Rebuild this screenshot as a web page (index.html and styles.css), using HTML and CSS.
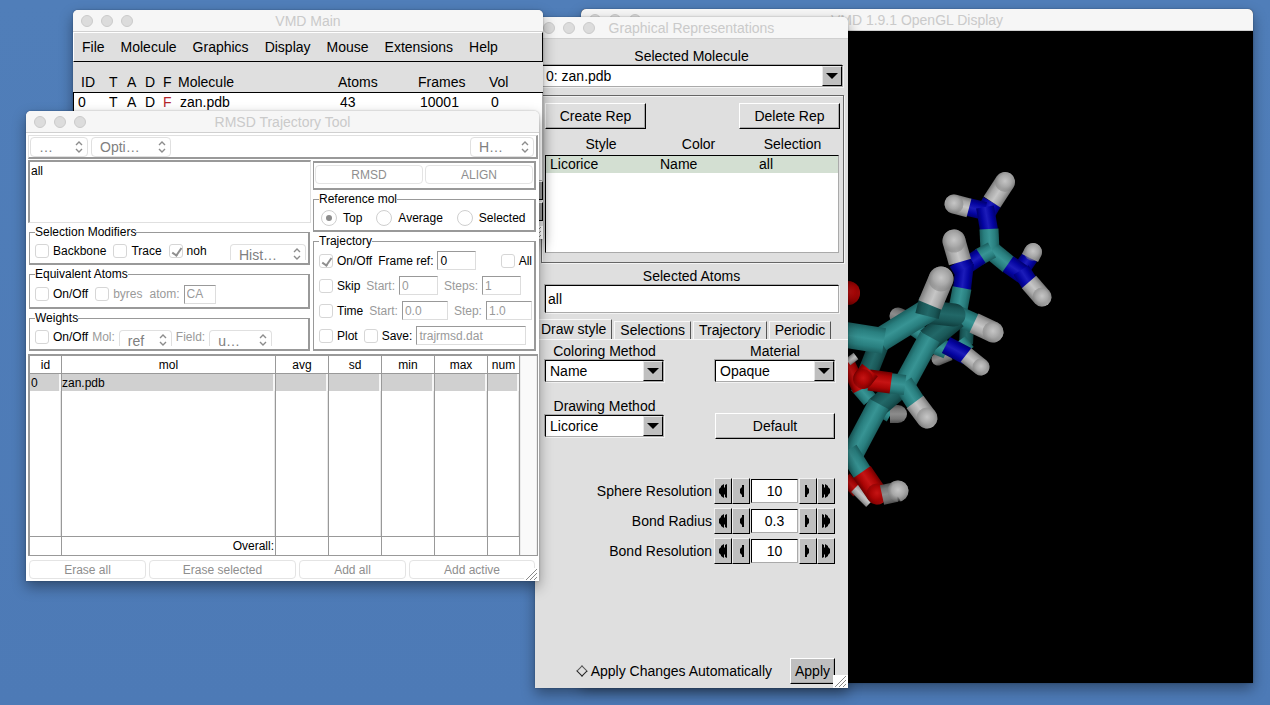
FILE: index.html
```html
<!DOCTYPE html>
<html lang="en">
<head>
<meta charset="utf-8">
<title>VMD</title>
<link rel="stylesheet" href="styles.css">
</head>
<body>
<main class="desktop">

  <section class="window display-window">
    <header class="titlebar"><span class="lights"><i></i><i></i><i></i></span><h2>VMD 1.9.1 OpenGL Display</h2></header>
    <svg class="scene" id="scene" viewBox="581 31 672 652" preserveAspectRatio="xMinYMin meet" role="img" aria-label="Licorice model of zan.pdb"></svg>
  </section>

  <section class="window rep-window">
    <header class="titlebar"><span class="lights"><i></i><i></i><i></i></span><h2>Graphical Representations</h2></header>
    <div class="rep-body">
      <label class="caption" for="selmol">Selected Molecule</label>
      <span class="combo combo-wide"><select id="selmol"><option>0: zan.pdb</option></select><span class="arrow"><svg viewBox="0 0 12 6"><path d="M0 0H12L6 6Z"/></svg></span></span>
      <div class="rep-frame">
        <div class="rep-actions"><button class="bevel">Create Rep</button><button class="bevel">Delete Rep</button></div>
        <table class="rep-table">
          <thead><tr><th>Style</th><th>Color</th><th>Selection</th></tr></thead>
          <tbody><tr><td>Licorice</td><td>Name</td><td>all</td></tr></tbody>
        </table>
      </div>
      <label class="caption atoms-caption" for="selatoms">Selected Atoms</label>
      <input class="sunken atoms-input" id="selatoms" value="all">
      <nav class="tabs"><button class="tab active">Draw style</button><button class="tab">Selections</button><button class="tab">Trajectory</button><button class="tab">Periodic</button></nav>
      <div class="draw-grid">
        <div class="field"><label for="coloring">Coloring Method</label><span class="combo"><select id="coloring"><option>Name</option></select><span class="arrow"><svg viewBox="0 0 12 6"><path d="M0 0H12L6 6Z"/></svg></span></span></div>
        <div class="field"><label for="material">Material</label><span class="combo"><select id="material"><option>Opaque</option></select><span class="arrow"><svg viewBox="0 0 12 6"><path d="M0 0H12L6 6Z"/></svg></span></span></div>
        <div class="field"><label for="drawing">Drawing Method</label><span class="combo"><select id="drawing"><option>Licorice</option></select><span class="arrow"><svg viewBox="0 0 12 6"><path d="M0 0H12L6 6Z"/></svg></span></span></div>
        <div class="field field-end"><button class="bevel">Default</button></div>
      </div>
      <svg class="defs" aria-hidden="true">
        <symbol id="one" viewBox="0 0 14 16"><path d="M10 2V14H8V12L7 11L6 10V6L7 5L8 4V2Z"/></symbol>
        <symbol id="two" viewBox="0 0 14 16"><path d="M3 6L5 4V3L8 1V5L9 4V2L11 1V15L9 14V12L8 11V15L5 13V12L3 10Z"/></symbol>
      </svg>
      <div class="counters">
        <div class="counter"><label for="sphere">Sphere Resolution</label><span class="spin"><button aria-label="Much less"><svg><use href="#two"/></svg></button><button aria-label="Less"><svg><use href="#one"/></svg></button><input id="sphere" value="10"><button class="flip" aria-label="More"><svg><use href="#one"/></svg></button><button class="flip" aria-label="Much more"><svg><use href="#two"/></svg></button></span></div>
        <div class="counter"><label for="radius">Bond Radius</label><span class="spin"><button aria-label="Much less"><svg><use href="#two"/></svg></button><button aria-label="Less"><svg><use href="#one"/></svg></button><input id="radius" value="0.3"><button class="flip" aria-label="More"><svg><use href="#one"/></svg></button><button class="flip" aria-label="Much more"><svg><use href="#two"/></svg></button></span></div>
        <div class="counter"><label for="bondres">Bond Resolution</label><span class="spin"><button aria-label="Much less"><svg><use href="#two"/></svg></button><button aria-label="Less"><svg><use href="#one"/></svg></button><input id="bondres" value="10"><button class="flip" aria-label="More"><svg><use href="#one"/></svg></button><button class="flip" aria-label="Much more"><svg><use href="#two"/></svg></button></span></div>
      </div>
      <footer class="apply-row"><label><input type="checkbox" class="diamond">Apply Changes Automatically</label><button class="bevel apply">Apply</button></footer>
    </div>
    <svg class="grip" viewBox="0 0 15 13"><path d="M2 12L13 1M6 12L13 5M10 12L13 9"/></svg>
  </section>

  <section class="window main-window">
    <header class="titlebar"><span class="lights"><i></i><i></i><i></i></span><h2>VMD Main</h2></header>
    <nav class="menubar"><button>File</button><button>Molecule</button><button>Graphics</button><button>Display</button><button>Mouse</button><button>Extensions</button><button>Help</button></nav>
    <table class="mol-table">
      <colgroup><col class="c-id"><col class="c-flag"><col class="c-flag"><col class="c-flag"><col class="c-fixed"><col class="c-name"><col class="c-atoms"><col class="c-frames"><col class="c-vol"></colgroup>
      <thead><tr><th>ID</th><th>T</th><th>A</th><th>D</th><th>F</th><th>Molecule</th><th>Atoms</th><th>Frames</th><th>Vol</th></tr></thead>
      <tbody><tr><td>0</td><td>T</td><td>A</td><td>D</td><td class="fixed">F</td><td>zan.pdb</td><td>43</td><td>10001</td><td>0</td></tr></tbody>
    </table>
    <div class="transport"><span></span><span></span></div>
    <svg class="grip" viewBox="0 0 15 13"><path d="M2 12L13 1M6 12L13 5M10 12L13 9"/></svg>
  </section>

  <section class="window rmsd-window">
    <header class="titlebar"><span class="lights"><i></i><i></i><i></i></span><h2>RMSD Trajectory Tool</h2></header>
    <div class="rmsd-body">
      <div class="rmsd-menu">
        <span class="popup p-file"><select aria-label="File"><option>…</option></select><svg viewBox="0 0 8 12"><path d="M1 4L4 1L7 4M1 8L4 11L7 8"/></svg></span>
        <span class="popup p-opt"><select aria-label="Options"><option>Opti…</option></select><svg viewBox="0 0 8 12"><path d="M1 4L4 1L7 4M1 8L4 11L7 8"/></svg></span>
        <span class="popup p-help"><select aria-label="Help"><option>H…</option></select><svg viewBox="0 0 8 12"><path d="M1 4L4 1L7 4M1 8L4 11L7 8"/></svg></span>
      </div>
      <div class="rmsd-columns">
        <div class="left-col">
          <textarea aria-label="Selection">all</textarea>
          <fieldset><legend>Selection Modifiers</legend>
            <div class="row"><label><input type="checkbox">Backbone</label><label><input type="checkbox">Trace</label><label><input type="checkbox" checked>noh</label>
            <span class="popup clipped p-hist end"><select aria-label="History"><option>Hist…</option></select><svg viewBox="0 0 8 12"><path d="M1 4L4 1L7 4M1 8L4 11L7 8"/></svg></span></div>
          </fieldset>
          <fieldset class="equiv"><legend>Equivalent Atoms</legend>
            <div class="row"><label><input type="checkbox">On/Off</label><label class="off"><input type="checkbox">byres</label><label class="off">atom: <input type="text" class="w-atom" value="CA"></label></div>
          </fieldset>
          <fieldset><legend>Weights</legend>
            <div class="row tight"><label><input type="checkbox">On/Off</label><label class="off" for="wmol">Mol:</label><span class="popup clipped p-ref"><select id="wmol"><option>ref</option></select><svg viewBox="0 0 8 12"><path d="M1 4L4 1L7 4M1 8L4 11L7 8"/></svg></span><label class="off" for="wfield">Field:</label><span class="popup clipped p-user"><select id="wfield"><option>u…</option></select><svg viewBox="0 0 8 12"><path d="M1 4L4 1L7 4M1 8L4 11L7 8"/></svg></span></div>
          </fieldset>
        </div>
        <div class="right-col">
          <div class="actions"><button class="aqua">RMSD</button><button class="aqua">ALIGN</button></div>
          <fieldset><legend>Reference mol</legend>
            <div class="row radios"><label><input type="radio" name="ref" checked>Top</label><label><input type="radio" name="ref">Average</label><label><input type="radio" name="ref">Selected</label></div>
          </fieldset>
          <fieldset class="traj"><legend>Trajectory</legend>
            <div class="row"><label><input type="checkbox" checked>On/Off</label><label>Frame ref: <input type="text" class="w-num" value="0"></label><label class="end"><input type="checkbox">All</label></div>
            <div class="row"><label><input type="checkbox">Skip</label><label class="off">Start: <input type="text" class="w-num" value="0"></label><label class="off">Steps: <input type="text" class="w-num" value="1"></label></div>
            <div class="row"><label><input type="checkbox">Time</label><label class="off">Start: <input type="text" class="w-time" value="0.0"></label><label class="off">Step: <input type="text" class="w-time" value="1.0"></label></div>
            <div class="row"><label><input type="checkbox">Plot</label><label><input type="checkbox">Save: <input type="text" class="w-file off" value="trajrmsd.dat"></label></div>
          </fieldset>
        </div>
      </div>
      <div class="results">
        <table>
          <colgroup><col class="r-id"><col><col class="r-num"><col class="r-num"><col class="r-num"><col class="r-num"><col class="r-id"></colgroup>
          <thead><tr><th>id</th><th>mol</th><th>avg</th><th>sd</th><th>min</th><th>max</th><th>num</th></tr></thead>
          <tbody>
            <tr class="selected"><td>0</td><td>zan.pdb</td><td></td><td></td><td></td><td></td><td></td></tr>
            <tr class="filler"><td></td><td></td><td></td><td></td><td></td><td></td><td></td></tr>
          </tbody>
          <tfoot><tr><td></td><td>Overall:</td><td></td><td></td><td></td><td></td><td></td></tr></tfoot>
        </table>
        <div class="scroll"></div>
      </div>
      <footer class="rmsd-buttons"><button class="aqua">Erase all</button><button class="aqua">Erase selected</button><button class="aqua">Add all</button><button class="aqua">Add active</button></footer>
    </div>
    <svg class="grip" viewBox="0 0 15 13"><path d="M2 12L13 1M6 12L13 5M10 12L13 9"/></svg>
  </section>

</main>
<script src="scene.js"></script>
</body>
</html>
```

FILE: styles.css
```css
* { box-sizing: border-box; }
body { margin: 0; font-family: "Liberation Sans", Arial, sans-serif; font-size: 14px; color: #000; }
button, input, select, textarea { font: inherit; color: inherit; margin: 0; padding: 0; border: 0; border-radius: 0; background: none; appearance: none; outline: 0; }
table { border-collapse: separate; border-spacing: 0; table-layout: fixed; }
th { font-weight: normal; }
th, td { padding: 0; }

.desktop { position: relative; height: 100vh; overflow: hidden; background: linear-gradient(#507eb9, #4d7ab6); }
.window { position: absolute; display: flex; flex-direction: column; border-radius: 5px 5px 0 0; background: #dfdfdf; box-shadow: 0 6px 14px rgba(0,0,0,.38), 0 0 2px rgba(0,0,0,.3); }
.titlebar { position: relative; display: flex; flex: none; align-items: center; justify-content: center; height: 22px; background: #f6f6f6; border-bottom: 1px solid #d0d0d0; border-radius: 5px 5px 0 0; }
.titlebar h2 { margin: 0; font-size: 14px; line-height: 20px; font-weight: normal; color: #cacaca; }
.lights { position: absolute; left: 8px; top: 5px; display: flex; gap: 8px; }
.lights i { width: 12px; height: 12px; border-radius: 50%; background: #dcdcdc; border: 1px solid #cbcbcb; }
.grip { position: absolute; right: 0; bottom: 0; width: 15px; height: 13px; background: #fff; }
.grip path { stroke: #888; fill: none; }

.display-window { left: 581px; top: 9px; right: 17px; bottom: 22px; background: #000; }
.scene { display: block; width: 100%; flex: 1; min-height: 0; background: #000; }

/* Graphical Representations */
.rep-window { left: 535px; top: 17px; width: 313px; height: 671px; }
.rep-body { flex: 1; display: flex; flex-direction: column; padding-top: 8px; }
.caption { display: block; text-align: center; line-height: 18px; }
.sunken, .combo { background: #fff; border: 1px solid; border-color: #000 #aaa #aaa #000; box-shadow: -1px -1px 0 #aaa, 1px 1px 0 #f2f2f2; }
.combo { display: flex; height: 22px; }
.combo select { flex: 1; min-width: 0; padding-left: 4px; }
.combo-wide { margin: 0 5px 0 6px; }
.arrow { display: flex; align-items: center; justify-content: center; width: 20px; background: #bfbfbf; border: 1px solid; border-color: #e8e8e8 #000 #000 #e8e8e8; }
.arrow svg { width: 12px; height: 6px; }
.bevel { height: 26px; background: #dfdfdf; border: 1px solid; border-color: #fff #000 #000 #fff; box-shadow: inset -1px -1px 0 #a8a8a8; }
.rep-frame { margin: 8px 4px 0 6px; padding: 7px 3px 9px; border: 1px solid #666; box-shadow: inset 1px 1px 0 #f4f4f4, 1px 1px 0 #f4f4f4; }
.rep-actions { display: flex; justify-content: space-between; }
.rep-actions .bevel { width: 101px; }
.rep-table { width: 100%; height: 124px; display: flex; flex-direction: column; padding-right: 1px; }
.rep-table tr { display: grid; grid-template-columns: 110px 1fr 93px; }
.rep-table thead tr { grid-template-columns: 112px 1fr 93px; }
.rep-table thead th:nth-child(2) { padding-right: 6px; }
.rep-table th { line-height: 22px; padding-top: 4px; }
.rep-table tbody { flex: 1; background: #fff; border: 1px solid; border-color: #000 #aaa #aaa #000; }
.rep-table tbody tr { background: #d3dfd2; line-height: 17px; padding-left: 4px; }
.rep-table tbody td:last-child { padding-left: 14px; }
.atoms-caption { margin-top: 4px; }
.atoms-input { height: 28px; margin: 0 9px 0 10px; padding-left: 2px; }
.tabs { display: flex; align-items: flex-end; gap: 2px; height: 26px; margin-top: 1px; border-bottom: 1px solid #f8f8f8; }
.tab { height: 18px; padding: 0 5px; border: 1px solid; border-color: #f8f8f8 #555 transparent #f8f8f8; border-bottom: 0; line-height: 17px; }
.tab.active { height: 20px; padding: 0 5px 0 6px; border-left: 0; }
.draw-grid { display: grid; grid-template-columns: 119px 120px; justify-content: space-between; row-gap: 15px; padding: 2px 13px 0 10px; }
.field { display: flex; flex-direction: column; }
.field label { line-height: 18px; text-align: center; }
.field-end { justify-content: flex-end; }
.field:nth-child(n+3) { height: 42px; }
.defs { position: absolute; width: 0; height: 0; }
.counters { display: flex; flex-direction: column; gap: 4px; padding: 39px 13px 0 0; }
.counter { display: flex; align-items: center; justify-content: flex-end; gap: 2px; height: 26px; }
.spin { display: flex; align-items: center; height: 26px; width: 121px; }
.spin button { width: 18px; height: 26px; background: #bfbfbf; border: 1px solid; border-color: #f0f0f0 #000 #000 #f0f0f0; display: flex; align-items: center; justify-content: center; }
.spin button svg { width: 14px; height: 16px; flex: none; }
.spin .flip svg { transform: scaleX(-1); }
.spin input { flex: 1; min-width: 0; height: 24px; margin: 0 1px; text-align: center; background: #fff; border: 1px solid; border-color: #000 #aaa #aaa #000; }
.apply-row { display: flex; align-items: center; justify-content: flex-end; gap: 18px; margin-top: auto; padding: 0 13px 4px 0; }
.apply-row label { display: flex; align-items: center; gap: 5px; }
.diamond { width: 8px; height: 8px; border: 1px solid; border-color: #555 #222 #222 #555; transform: rotate(45deg); }
.apply { width: 45px; background: #bfbfbf; }

/* VMD Main */
.main-window { left: 73px; top: 10px; width: 470px; height: 229px; }
.menubar { display: flex; gap: 16px; height: 30px; padding: 0 8px; border: 1px solid; border-color: #fff #000 #000 #fff; }
.mol-table { width: 100%; }
.c-id { width: 36px; }
.c-flag { width: 18px; }
.c-fixed { width: 15px; }
.c-atoms { width: 80px; }
.c-frames { width: 71px; }
.c-vol { width: 54px; }
.mol-table th, .mol-table td { text-align: left; white-space: nowrap; }
.mol-table th { height: 31px; padding: 9px 0 0; border-bottom: 1px solid #000; }
.mol-table th:first-child { padding-left: 8px; }
.mol-table td { background: #fff; height: 88px; vertical-align: top; line-height: 19px; padding-left: 2px; border-bottom: 1px solid #aaa; }
.mol-table td:first-child { padding-left: 4px; border-left: 1px solid #000; }
.mol-table td:nth-child(2), .mol-table td:nth-child(3), .mol-table td:nth-child(4), .mol-table td:nth-child(5) { padding-left: 0; }
.mol-table td.fixed { color: #b3262b; }
.mol-table td:last-child { border-right: 1px solid #aaa; }
.transport { display: flex; flex-direction: column; align-items: flex-end; gap: 2px; }
.transport span { width: 30px; height: 19px; background: #999; border: 1px solid; border-color: #fff #000 #000 #fff; }

/* RMSD Trajectory Tool */
.rmsd-window { left: 26px; top: 111px; width: 513px; background: #fff; font-size: 12px; }
.rmsd-body { padding: 2px 1px 2px 2px; }
.rmsd-menu { display: flex; gap: 3px; height: 24px; padding: 1px 2px 0 1px; border: solid; border-width: 1px 2px 2px 1px; border-color: #e0e0e0 #999 #999 #e0e0e0; }
.popup { position: relative; display: flex; height: 20px; border: 1px solid #e0e0e0; border-radius: 4px; color: #808080; font-size: 14px; }
.popup select { width: 100%; padding-left: 8px; }
.popup svg { position: absolute; right: 4px; top: 3px; width: 8px; height: 12px; fill: none; stroke: #8c8c8c; stroke-width: 1.4; }
.popup.clipped { height: 16px; align-self: flex-end; margin-bottom: 3px; border-bottom: 0; border-radius: 4px 4px 0 0; }
.popup.clipped select { height: 19px; }
.p-file { width: 58px; }
.p-opt { width: 80px; }
.p-help { width: 64px; margin-left: auto; }
.p-hist { width: 76px; }
.p-ref { width: 53px; }
.p-user { width: 63px; }
.rmsd-columns { display: grid; grid-template-columns: 283px 1fr; gap: 2px; padding: 1px 2px 3px 0; }
.left-col { display: flex; flex-direction: column; gap: 2px; }
.left-col fieldset { margin: 0 1px; }
textarea { display: block; width: 100%; height: 63px; resize: none; padding: 2px 1px; border: solid; border-width: 2px 1px 1px 2px; border-color: #999 #e0e0e0 #e0e0e0 #999; line-height: 15px; }
fieldset { min-width: 0; margin: 0; padding: 0 2px 0 5px; border: solid #999; border-width: 1px 2px 2px 1px; height: 40px; }
fieldset.equiv { height: 42px; }
.equiv .row { height: 26px; }
legend { padding: 0; line-height: 14px; }
.row { display: flex; align-items: center; gap: 7px; height: 24px; }
.row.tight { gap: 4px; }
.row label { display: flex; align-items: center; gap: 4px; white-space: nowrap; }
.end { margin-left: auto; }
.off, .off input { color: #9a9a9a; }
input[type=checkbox]:not(.diamond) { position: relative; flex: none; width: 14px; height: 14px; border: 1px solid #d6d6d6; border-radius: 3px; }
input[type=checkbox]:not(.diamond):checked::before { content: ""; position: absolute; left: 4px; top: 1px; width: 4px; height: 8px; border: solid #8f8f8f; border-width: 0 2px 2px 0; transform: rotate(35deg); }
input[type=radio] { position: relative; flex: none; width: 16px; height: 16px; border: 1px solid #cfcfcf; border-radius: 50%; }
input[type=radio]:checked::before { content: ""; position: absolute; left: 4px; top: 4px; width: 6px; height: 6px; border-radius: 50%; background: #8c8c8c; }
input[type=text] { height: 19px; padding-left: 2px; border: 1px solid; border-color: #999 #ddd #ddd #999; }
.w-atom { width: 32px; }
.w-num { width: 39px; }
.w-time { width: 46px; }
.w-file { width: 110px; }
.right-col { display: flex; flex-direction: column; gap: 2px; padding-top: 1px; }
.actions { display: flex; gap: 2px; height: 29px; padding: 2px 1px; border: solid #999; border-width: 2px 2px 2px 1px; }
.aqua { flex: 1; height: 19px; border: 1px solid #e4e4e4; border-radius: 4px; color: #8e8e8e; }
.radios { padding-left: 2px; gap: 14px; }
.radios label { gap: 6px; }
.right-col .traj { height: 117px; }
.traj .row { height: 25px; gap: 6px; }
.traj label { gap: 4px; }
.results { display: flex; height: 202px; border: solid #999; border-width: 2px 1px 1px 2px; }
.results table { flex: 1; width: 0; height: 199px; }
.r-id { width: 32px; }
.r-num { width: 53px; }
.results th { height: 18px; border-right: 1px solid #999; border-bottom: 1px solid #999; }
.results td { border-right: 1px solid #999; }
.results .selected td { height: 17px; background: #d0d0d0; box-shadow: inset -2px 0 0 #f6f6f6; }
.results .filler td { box-shadow: inset -1px 0 0 #e6e6e6; }
.results tfoot td { height: 19px; border-top: 1px solid #999; text-align: right; padding-right: 1px; }
.results tbody td:first-child { padding-left: 1px; }
.scroll { width: 17px; background: #fafafa; border-left: 1px solid #ececec; border-right: 1px solid #ececec; }
.rmsd-buttons { display: grid; grid-template-columns: 117px 147px 107px 1fr; gap: 3px; padding: 4px 3px 0 1px; }
```

FILE: scene.js
```js
const NS = "http://www.w3.org/2000/svg";
const scene = document.getElementById("scene");

// Each atom colour: [edge, body, highlight]
const COLORS = {
  C: ["#1b5e5e", "#297f7f", "#389494"],
  D: ["#103f3f", "#1a5858", "#226868"],
  H: ["#787878", "#a8a8a8", "#c6c6c6"],
  G: ["#505050", "#777777", "#8c8c8c"],
  N: ["#000070", "#0404a0", "#1c1cba"],
  O: ["#700000", "#aa0505", "#c61414"]
};

// x1, y1, x2, y2, width, colour; a trailing 1 rounds the far end
const BONDS = [
  [905, 322, 925, 336, 15, "C"],
  [907, 320, 898, 316, 17, "G", 1],
  [967, 325, 966, 344, 14, "D"],
  [950, 354, 938, 359, 13, "G", 1],
  [845, 293, 848, 293, 24, "O", 1],
  [845, 478, 858, 492, 13, "O"],
  [855, 488, 870, 503, 11, "H"],
  [870, 400, 857, 385, 16, "C"],
  [860, 390, 846, 360, 15, "O"],
  [848, 362, 856, 356, 8, "H"],
  [992, 202, 985, 214, 20, "N"],
  [992, 202, 1005, 182, 20, "H", 1],
  [985, 211, 968, 207, 18, "N"],
  [969, 208, 954, 204, 19, "H", 1],
  [985, 207, 989, 230, 18, "N"],
  [989, 229, 990, 251, 19, "C", 1],
  [992, 251, 1009, 265, 19, "C"],
  [1021, 270, 1030, 257, 17, "N"],
  [1030, 258, 1033, 252, 18, "H", 1],
  [1008, 264, 1024, 275, 19, "N"],
  [1021, 270, 1030, 284, 18, "N"],
  [1029, 282, 1042, 297, 19, "H", 1],
  [992, 250, 979, 257, 17, "C"],
  [981, 256, 966, 266, 17, "N"],
  [965, 263, 962, 289, 18, "N"],
  [959, 261, 964, 269, 22, "N"],
  [960, 262, 954, 241, 23, "H", 1],
  [962, 288, 956, 320, 19, "C"],
  [925, 341, 947, 350, 18, "C"],
  [960, 340, 968, 351, 14, "C"],
  [946, 345, 967, 356, 18, "N"],
  [966, 355, 981, 367, 17, "H", 1],
  [954, 314, 976, 324, 20, "C"],
  [974, 323, 993, 332, 21, "H", 1],
  [956, 317, 928, 340, 24, "D"],
  [930, 337, 905, 383, 22, "C"],
  [877, 406, 891, 414, 17, "C"],
  [890, 414, 898, 414, 18, "G", 1],
  [905, 383, 877, 407, 22, "D"],
  [879, 404, 853, 453, 22, "C"],
  [903, 383, 916, 403, 20, "C"],
  [915, 402, 927, 418, 21, "H", 1],
  [880, 342, 868, 372, 20, "D"],
  [905, 385, 889, 383, 20, "C"],
  [891, 383, 869, 380, 21, "O"],
  [870, 370, 863, 379, 20, "O", 1],
  [927, 312, 954, 315, 23, "D", 1],
  [930, 309, 880, 340, 24, "C"],
  [884, 341, 840, 334, 26, "C"],
  [927, 316, 931, 300, 24, "D"],
  [930, 305, 941, 279, 25, "H", 1],
  [848, 450, 863, 474, 20, "C"],
  [862, 472, 877, 494, 21, "O", 1],
  [882, 495, 896, 492, 20, "G"],
  [896, 492, 898, 491, 21, "H", 1]
];

function add(name, attrs, parent) {
  const el = document.createElementNS(NS, name);
  for (const key in attrs) el.setAttribute(key, attrs[key]);
  parent.appendChild(el);
  return el;
}

BONDS.forEach(([x1, y1, x2, y2, w, color, cap], i) => {
  const len = Math.hypot(x2 - x1, y2 - y1);
  const r = w / 2;
  const nx = -(y2 - y1) / len * r;
  const ny = (x2 - x1) / len * r;
  const tones = COLORS[color];
  const side = add("linearGradient", {
    id: "side" + i, gradientUnits: "userSpaceOnUse",
    x1: x1 - nx, y1: y1 - ny, x2: x1 + nx, y2: y1 + ny
  }, scene);
  [[0, 0], [0.22, 1], [0.5, 2], [0.78, 1], [1, 0]].forEach(([offset, tone]) =>
    add("stop", { offset, "stop-color": tones[tone] }, side));
  const end = cap ? `A${r} ${r} 0 0 1 ` : "L";
  add("path", {
    d: `M${x1 + nx} ${y1 + ny}L${x1 - nx} ${y1 - ny}L${x2 - nx} ${y2 - ny}${end}${x2 + nx} ${y2 + ny}Z`,
    fill: `url(#side${i})`
  }, scene);
  if (cap && (color === "H" || color === "O")) {
    const ball = add("radialGradient", { id: "ball" + i, cx: 0.5, cy: 0.45, r: 0.55 }, scene);
    add("stop", { offset: 0, "stop-color": tones[2] }, ball);
    add("stop", { offset: 0.55, "stop-color": tones[1] }, ball);
    add("stop", { offset: 1, "stop-color": tones[0], "stop-opacity": 0.4 }, ball);
    add("circle", { cx: x2, cy: y2, r, fill: `url(#ball${i})` }, scene);
  }
});
```
